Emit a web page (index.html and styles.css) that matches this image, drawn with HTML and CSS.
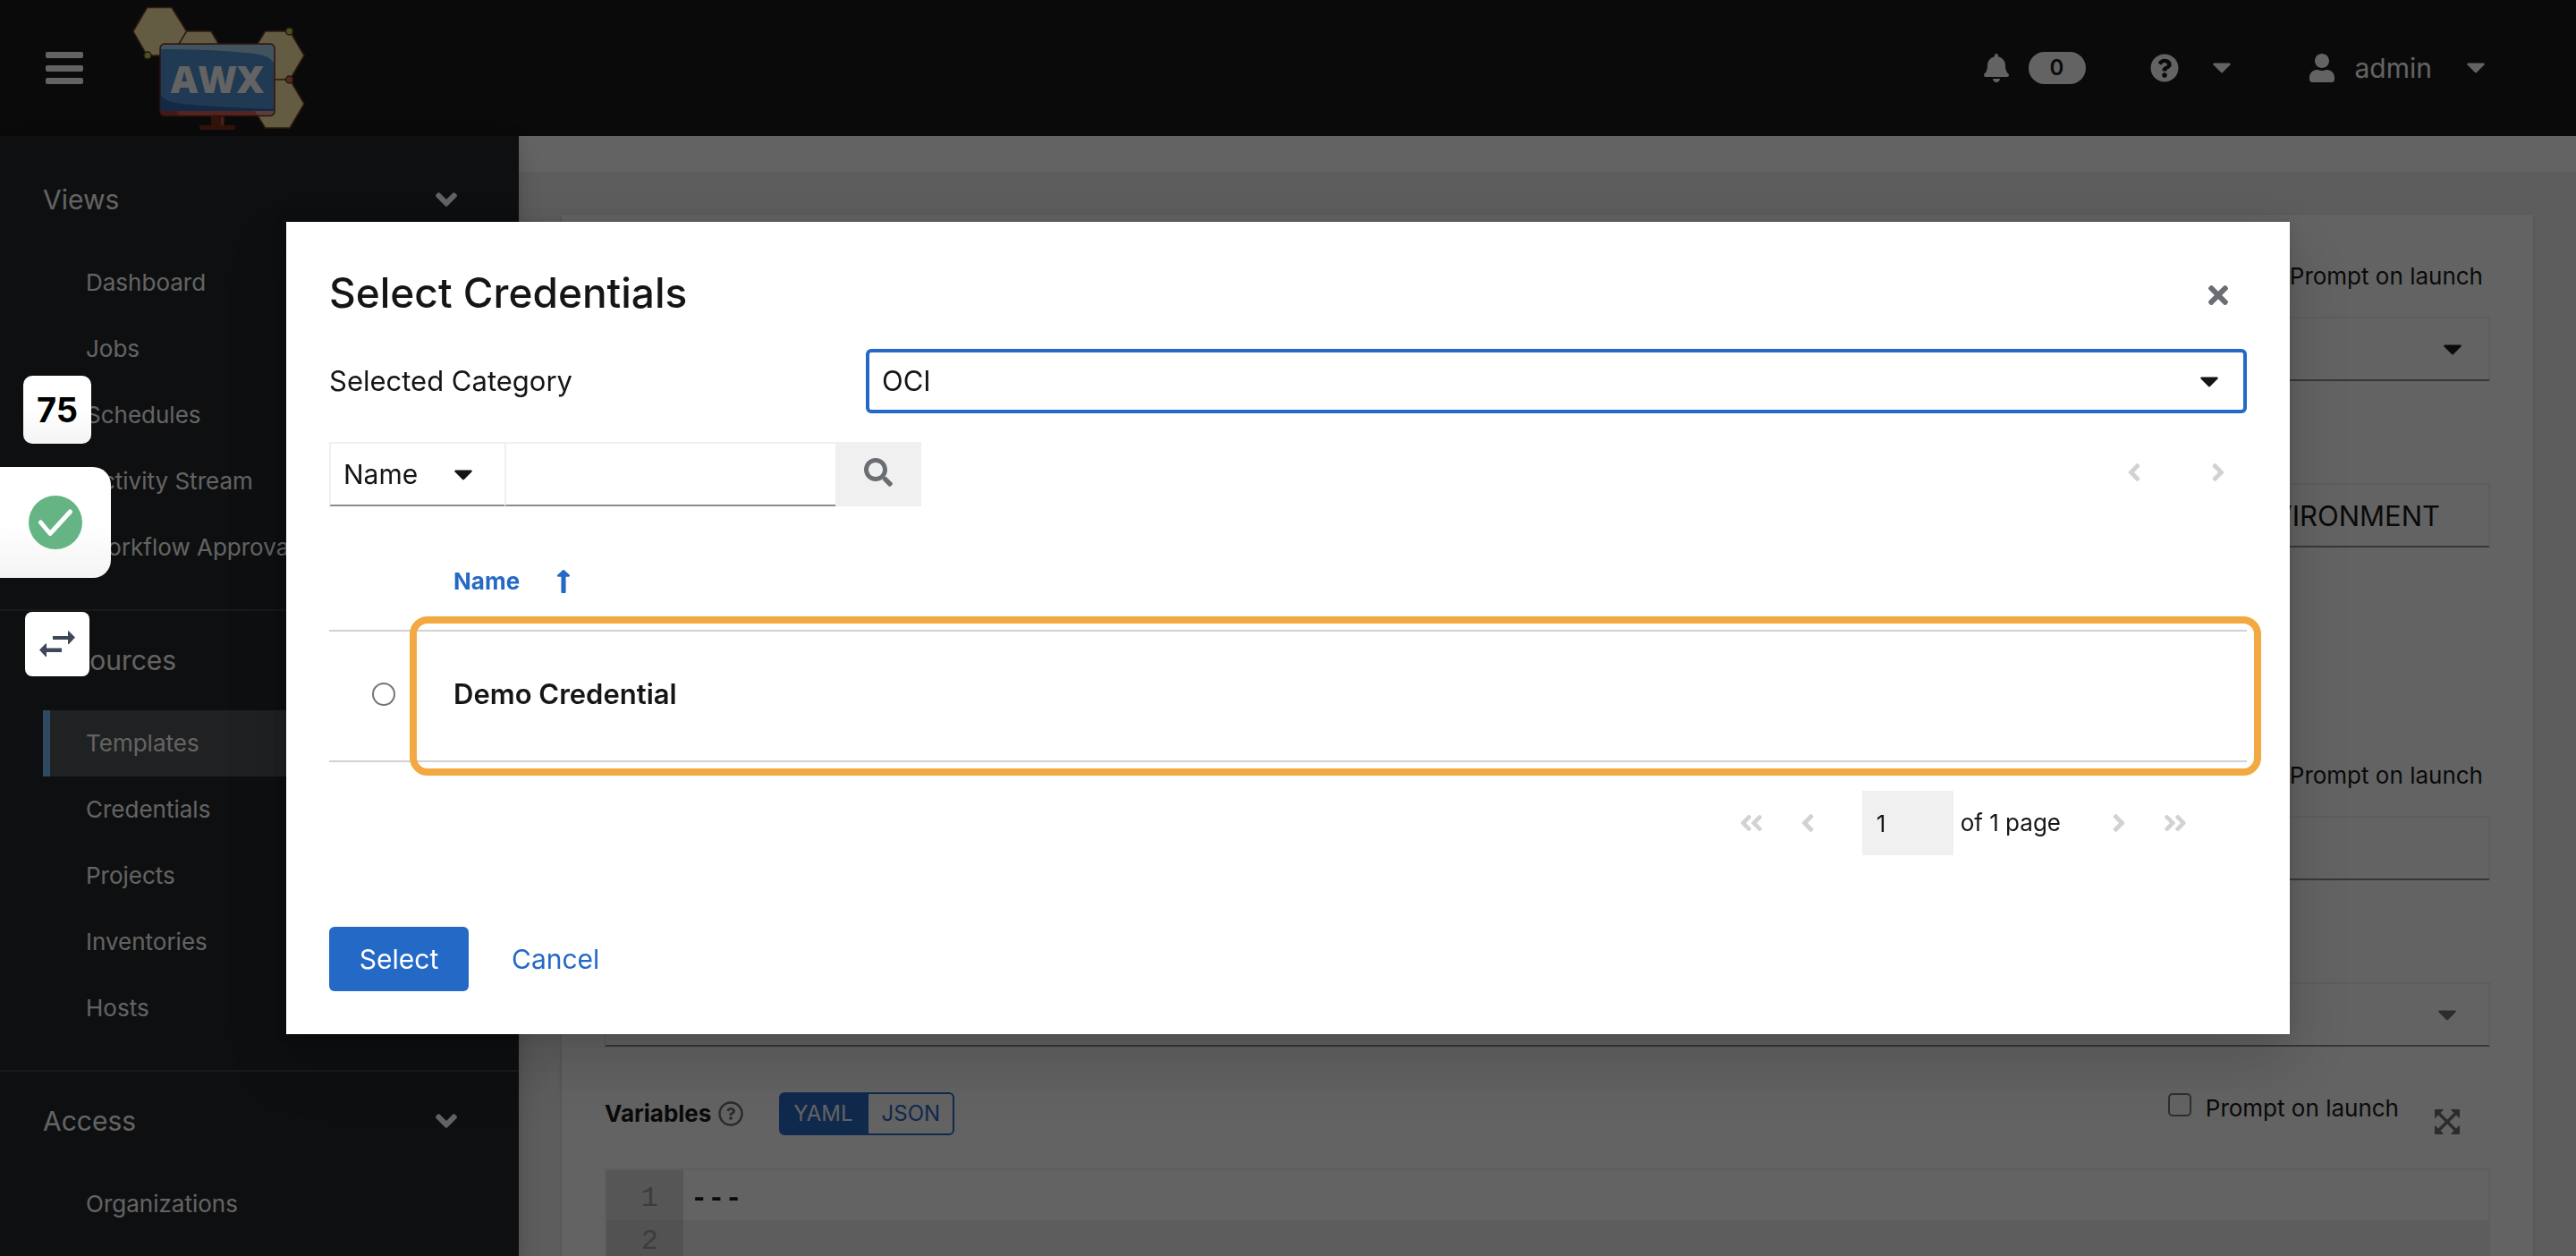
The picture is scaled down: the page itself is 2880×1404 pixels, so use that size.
FILE: index.html
```
<!DOCTYPE html>
<html lang="en">
<head>
<meta charset="utf-8">
<meta name="viewport" content="width=device-width, initial-scale=1">
<title>AWX | Select Credentials</title>
<link rel="stylesheet" href="styles.css">
</head>
<body>
<svg class="sprite" aria-hidden="true">
  <symbol id="caret" viewBox="8 190 304 175"><path d="M31.3 192h257.3c17.8 0 26.7 21.5 14.1 34.1L174.1 354.8c-7.8 7.8-20.5 7.8-28.3 0L17.2 226.1C4.6 213.5 13.5 192 31.3 192z"/></symbol>
  <symbol id="angle-down" viewBox="0 150 320 212"><path d="M143 352.3L7 216.3c-9.4-9.4-9.4-24.6 0-33.9l22.6-22.6c9.4-9.4 24.6-9.4 33.9 0l96.4 96.4 96.4-96.4c9.4-9.4 24.6-9.4 33.9 0l22.6 22.6c9.4 9.4 9.4 24.6 0 33.9l-136 136c-9.2 9.4-24.4 9.4-33.8 0z"/></symbol>
  <symbol id="angle-left" viewBox="22 94 212 324"><path d="M31.7 239l136-136c9.4-9.4 24.6-9.4 33.9 0l22.6 22.6c9.4 9.4 9.4 24.6 0 33.9L127.9 256l96.4 96.4c9.4 9.4 9.4 24.6 0 33.9L201.7 409c-9.4 9.4-24.6 9.4-33.9 0l-136-136c-9.5-9.4-9.5-24.6-.1-34z"/></symbol>
  <symbol id="angle-right" viewBox="22 94 212 324"><path transform="translate(256 0) scale(-1 1)" d="M31.7 239l136-136c9.4-9.4 24.6-9.4 33.9 0l22.6 22.6c9.4 9.4 9.4 24.6 0 33.9L127.9 256l96.4 96.4c9.4 9.4 9.4 24.6 0 33.9L201.7 409c-9.4 9.4-24.6 9.4-33.9 0l-136-136c-9.5-9.4-9.5-24.6-.1-34z"/></symbol>
</svg>

<div class="app">
  <header class="masthead">
    <div class="brand">
      <button class="icon-button" type="button" aria-label="Toggle navigation">
        <svg width="42" height="36" viewBox="0 0 42 36"><rect width="42" height="7" rx="2"/><rect y="15" width="42" height="7" rx="2"/><rect y="29" width="42" height="7" rx="2"/></svg>
      </button>
      <a class="brand-link" href="#" aria-label="AWX home">
        <svg width="194" height="140" viewBox="148 6 194 140">
          <g fill="#ffedab" stroke="#7d4329" stroke-width="1.5">
            <path d="M208.500 35H236L252 62 236 89H208L192 62Z"/>
            <path d="M149 35L164.500 8.500H192L208.500 35 192 62H164.500Z"/>
            <path d="M280 62L296.500 35H324L340 62 324 89H296.500Z"/>
            <path d="M280 116L296.500 89H324L340 116 324 143H296.500Z"/>
          </g>
          <path d="M236 129h15v11h11q1 0 1 1v3q0 1-1 1H224q-1 0-1-1v-3q0-1 1-1h12z" fill="#7c2d18"/>
          <path d="M247 131h3v9h-3z" fill="#9a5847"/>
          <rect x="179" y="49" width="128" height="80.500" rx="5" fill="#4d94d3"/>
          <path d="M180 55V54q0-4 4-4H302q4 0 4 4V70Q301 62 285 60 240 55 180 55Z" fill="#acd4ee"/>
          <path d="M180 107Q186 114 204 116 240 120 306 122V125H180Z" fill="#3067b4"/>
          <path d="M180 124H306V126q0 3-4 3H184q-4 0-4-3Z" fill="#e0584f"/>
          <path d="M180 124H198L200 129H184q-4 0-4-3Z" fill="#b03c34"/>
          <path d="M285 124H306V126q0 3-4 3H288Z" fill="#f09a94"/>
          <rect x="179" y="49" width="128" height="80.500" rx="5" fill="none" stroke="#7d3020" stroke-width="1.500"/>
          <g stroke="#5a3c14" stroke-width="1.500"><circle cx="165" cy="62" r="4" fill="#b9d054"/><circle cx="323.500" cy="35" r="4" fill="#b9d054"/><circle cx="323.500" cy="89" r="4" fill="#f0605a"/></g>
          <text class="logo-text" x="243" y="104" text-anchor="middle">AWX</text>
        </svg>
      </a>
    </div>
    <div class="tools">
      <button class="tool notify" type="button" aria-label="Pending approvals">
        <svg width="28" height="32" viewBox="0 0 448 512"><path d="M224 512c35.32 0 63.97-28.65 63.97-64H160.03c0 35.35 28.65 64 63.97 64zm215.39-149.71c-19.32-20.76-55.47-51.99-55.47-154.29 0-77.7-54.48-139.9-127.94-155.16V32c0-17.67-14.32-32-31.98-32s-31.98 14.33-31.98 32v20.84C118.56 68.1 64.08 130.3 64.08 208c0 102.3-36.15 133.53-55.47 154.29-6 6.45-8.66 14.16-8.61 21.71.11 16.4 12.98 32 32.1 32h383.8c19.12 0 32-15.6 32.1-32 .05-7.55-2.61-15.27-8.61-21.71z"/></svg>
        <span class="badge">0</span>
      </button>
      <button class="tool help" type="button" aria-label="Help">
        <svg width="32" height="32" viewBox="0 0 512 512"><path d="M504 256c0 136.997-111.043 248-248 248S8 392.997 8 256C8 119.083 119.043 8 256 8s248 111.083 248 248zM262.655 90c-54.497 0-89.255 22.957-116.549 63.758-3.536 5.286-2.353 12.415 2.715 16.258l34.699 26.31c5.205 3.947 12.621 3.008 16.665-2.122 17.864-22.658 30.113-35.797 57.303-35.797 20.429 0 45.698 13.148 45.698 32.958 0 14.976-12.363 22.667-32.534 33.976C247.128 238.528 216 254.941 216 296v4c0 6.627 5.373 12 12 12h56c6.627 0 12-5.373 12-12v-1.333c0-28.462 83.186-29.647 83.186-106.667 0-58.002-60.165-102-116.531-102zM256 338c-25.365 0-46 20.635-46 46 0 25.364 20.635 46 46 46s46-20.636 46-46c0-25.365-20.635-46-46-46z"/></svg>
        <svg width="20" height="12"><use href="#caret"/></svg>
      </button>
      <button class="tool user" type="button">
        <svg width="28" height="32" viewBox="0 0 448 512"><path d="M224 256c70.7 0 128-57.3 128-128S294.7 0 224 0 96 57.3 96 128s57.3 128 128 128zm89.6 32h-16.7c-22.2 10.2-46.9 16-72.900 16s-50.6-5.800-72.900-16h-16.700C60.200 288 0 348.200 0 422.400V464c0 26.500 21.500 48 48 48h352c26.500 0 48-21.500 48-48v-41.600c0-74.200-60.200-134.400-134.400-134.400z"/></svg>
        <span class="user-name">admin</span>
        <svg width="20" height="12"><use href="#caret"/></svg>
      </button>
    </div>
  </header>

  <nav class="sidebar" aria-label="Global">
    <section class="nav-section">
      <button class="nav-title" type="button">Views <svg width="24" height="16"><use href="#angle-down"/></svg></button>
      <ul class="nav-list">
        <li><a href="#">Dashboard</a></li>
        <li><a href="#">Jobs</a></li>
        <li><a href="#">Schedules</a></li>
        <li><a href="#">Activity Stream</a></li>
        <li><a href="#">Workflow Approvals</a></li>
      </ul>
    </section>
    <section class="nav-section">
      <button class="nav-title" type="button">Resources <svg width="24" height="16"><use href="#angle-down"/></svg></button>
      <ul class="nav-list">
        <li><a class="current" href="#" aria-current="page">Templates</a></li>
        <li><a href="#">Credentials</a></li>
        <li><a href="#">Projects</a></li>
        <li><a href="#">Inventories</a></li>
        <li><a href="#">Hosts</a></li>
      </ul>
    </section>
    <section class="nav-section">
      <button class="nav-title" type="button">Access <svg width="24" height="16"><use href="#angle-down"/></svg></button>
      <ul class="nav-list">
        <li><a href="#">Organizations</a></li>
      </ul>
    </section>
  </nav>

  <main class="content">
    <div class="page-head"></div>
    <form class="card">
      <div class="row">
        <label class="prompt"><input type="checkbox"> Prompt on launch</label>
        <div class="select-wrap">
          <select class="field" aria-label="Job type"><option></option></select>
          <svg class="select-caret" width="20" height="12"><use href="#caret"/></svg>
        </div>
      </div>
      <div class="row">
        <input class="field environment" type="text" value="ENVIRONMENT" aria-label="Execution environment">
      </div>
      <div class="row"></div>
      <div class="row">
        <label class="prompt"><input type="checkbox"> Prompt on launch</label>
        <input class="field" type="text" aria-label="Credentials">
      </div>
      <div class="row">
        <div class="select-wrap muted">
          <select class="field" aria-label="Labels"><option></option></select>
          <svg class="select-caret" width="20" height="12"><use href="#caret"/></svg>
        </div>
      </div>
      <div class="variables">
        <div class="variables-bar">
          <span class="variables-title">Variables</span>
          <button class="hint" type="button" aria-label="More information about variables">
            <svg width="28" height="28" viewBox="0 0 28 28"><circle cx="14" cy="14" r="12.500" fill="none" stroke="currentColor" stroke-width="2.500"/><path transform="translate(3.500 3.200) scale(.041)" d="M262.655 90c-54.497 0-89.255 22.957-116.549 63.758-3.536 5.286-2.353 12.415 2.715 16.258l34.699 26.31c5.205 3.947 12.621 3.008 16.665-2.122 17.864-22.658 30.113-35.797 57.303-35.797 20.429 0 45.698 13.148 45.698 32.958 0 14.976-12.363 22.667-32.534 33.976C247.128 238.528 216 254.941 216 296v4c0 6.627 5.373 12 12 12h56c6.627 0 12-5.373 12-12v-1.333c0-28.462 83.186-29.647 83.186-106.667 0-58.002-60.165-102-116.531-102zM256 338c-25.365 0-46 20.635-46 46 0 25.364 20.635 46 46 46s46-20.636 46-46c0-25.365-20.635-46-46-46z"/></svg>
          </button>
          <div class="toggle">
            <button class="toggle-button on" type="button">YAML</button>
            <button class="toggle-button" type="button">JSON</button>
          </div>
          <label class="prompt"><input type="checkbox"> Prompt on launch</label>
          <button class="expand" type="button" aria-label="Expand input">
            <svg width="28" height="28" viewBox="0 0 28 28"><path d="M5 5L23 23M23 5L5 23" stroke="currentColor" stroke-width="3.500"/><path d="M1 0H9Q10 0 9.500 1L1 9.500Q0 10 0 9V1Q0 0 1 0ZM27 0H19Q18 0 18.500 1L27 9.500Q28 10 28 9V1Q28 0 27 0ZM1 28H9Q10 28 9.500 27L1 18.500Q0 18 0 19V27Q0 28 1 28ZM27 28H19Q18 28 18.500 27L27 18.500Q28 18 28 19V27Q28 28 27 28Z"/></svg>
          </button>
        </div>
        <div class="editor">
          <div class="line"><span class="number">1</span><code>---</code></div>
          <div class="line active"><span class="number">2</span><code></code></div>
        </div>
      </div>
    </form>
  </main>
</div>

<div class="backdrop">
  <div class="modal" role="dialog" aria-modal="true" aria-labelledby="modal-title">
    <div class="modal-head">
      <h1 class="modal-title" id="modal-title">Select Credentials</h1>
      <button class="close" type="button" aria-label="Close">
        <svg width="22" height="22" viewBox="0 80 352 352"><path d="M242.72 256l100.07-100.07c12.28-12.28 12.28-32.19 0-44.48l-22.24-22.24c-12.28-12.28-32.19-12.28-44.48 0L176 189.28 75.93 89.21c-12.28-12.28-32.19-12.28-44.48 0L9.21 111.45c-12.28 12.28-12.28 32.19 0 44.48L109.28 256 9.21 356.07c-12.28 12.28-12.28 32.19 0 44.48l22.24 22.24c12.28 12.28 32.2 12.28 44.48 0L176 322.72l100.07 100.07c12.28 12.28 32.2 12.28 44.48 0l22.24-22.24c12.28-12.28 12.28-32.19 0-44.48L242.72 256z"/></svg>
      </button>
    </div>

    <div class="category">
      <label class="category-label" for="category">Selected Category</label>
      <div class="select-wrap">
        <select class="category-select" id="category"><option>OCI</option></select>
        <svg class="select-caret" width="20" height="12"><use href="#caret"/></svg>
      </div>
    </div>

    <div class="toolbar">
      <div class="search">
        <div class="select-wrap search-key">
          <select class="field" aria-label="Search by"><option>Name</option></select>
          <svg class="select-caret" width="20" height="12"><use href="#caret"/></svg>
        </div>
        <input class="field search-input" type="search" aria-label="Search text">
        <button class="search-button" type="submit" aria-label="Search">
          <svg width="32" height="32" viewBox="0 0 512 512"><path d="M505 442.7L405.3 343c-4.5-4.5-10.6-7-17-7H372c27.6-35.3 44-79.7 44-128C416 93.1 322.9 0 208 0S0 93.1 0 208s93.1 208 208 208c48.3 0 92.7-16.4 128-44v16.3c0 6.4 2.5 12.5 7 17l99.7 99.7c9.4 9.4 24.6 9.4 33.9 0l28.3-28.3c9.4-9.4 9.4-24.6.1-34zM208 336c-70.7 0-128-57.2-128-128 0-70.7 57.2-128 128-128 70.7 0 128 57.2 128 128 0 70.7-57.2 128-128 128z"/></svg>
        </button>
      </div>
      <div class="top-pager">
        <button class="page-button" type="button" disabled aria-label="Previous page"><svg width="14" height="20"><use href="#angle-left"/></svg></button>
        <button class="page-button" type="button" disabled aria-label="Next page"><svg width="14" height="20"><use href="#angle-right"/></svg></button>
      </div>
    </div>

    <table class="credentials">
      <thead>
        <tr>
          <td class="pick"></td>
          <th scope="col">
            <button class="sort" type="button">Name <svg width="14" height="26" viewBox="19 30 218 452" preserveAspectRatio="none"><path d="M88 166.059V468c0 6.627 5.373 12 12 12h56c6.627 0 12-5.373 12-12V166.059h46.059c21.382 0 32.09-25.851 16.971-40.971l-86.059-86.059c-9.373-9.373-24.569-9.373-33.941 0l-86.059 86.059c-15.119 15.119-4.411 40.971 16.971 40.971H88z"/></svg></button>
          </th>
        </tr>
      </thead>
      <tbody>
        <tr>
          <td class="pick"><input class="radio" type="radio" name="credential" id="credential-1"></td>
          <td class="highlight"><label for="credential-1">Demo Credential</label></td>
        </tr>
      </tbody>
    </table>

    <div class="pager">
      <button class="page-button" type="button" disabled aria-label="First page"><svg width="12" height="20"><use href="#angle-left"/></svg><svg width="12" height="20"><use href="#angle-left"/></svg></button>
      <button class="page-button" type="button" disabled aria-label="Previous page"><svg width="14" height="20"><use href="#angle-left"/></svg></button>
      <div class="page-of"><input class="page-input" id="page" type="text" value="1"><label for="page">of 1 page</label></div>
      <button class="page-button" type="button" disabled aria-label="Next page"><svg width="14" height="20"><use href="#angle-right"/></svg></button>
      <button class="page-button" type="button" disabled aria-label="Last page"><svg width="12" height="20"><use href="#angle-right"/></svg><svg width="12" height="20"><use href="#angle-right"/></svg></button>
    </div>

    <div class="actions">
      <button class="primary" type="button">Select</button>
      <button class="link" type="button">Cancel</button>
    </div>
  </div>
</div>

<aside class="guide" aria-label="Guide">
  <div class="guide-count">75</div>
  <button class="guide-done" type="button" aria-label="Mark step done">
    <svg width="60" height="60" viewBox="0 0 60 60"><circle cx="30" cy="30" r="30" fill="#65b584"/><path d="M13.500 30L24 42.500 46.500 18" fill="none" stroke="#fff" stroke-width="5" stroke-linecap="round" stroke-linejoin="round"/></svg>
  </button>
  <button class="guide-swap" type="button" aria-label="Swap side">
    <svg width="40" height="30" viewBox="0 0 40 30"><path d="M15 6H32V1Q32 0 33 0.500L40 7.500 33 15Q32 15.500 32 14.500V10H15ZM25 19.500H8V15Q8 14 7 14.500L0 21.500 7 29Q8 29.500 8 28.500V24H25Z"/></svg>
  </button>
</aside>
</body>
</html>
```
FILE: styles.css
```
* { box-sizing: border-box; }

:root {
  --black: #151515;
  --blue: #2569c7;
  --grey: #f0f0f0;
  --line: #d2d2d2;
  --icon: #6a6e73;
}

body {
  margin: 0;
  height: 100vh;
  overflow: hidden;
  background: var(--grey);
  color: var(--black);
  font: 400 26px/42px Inter, "Noto Sans", sans-serif;
}

button, input, select {
  margin: 0;
  padding: 0;
  border: 0;
  border-radius: 0;
  background: none;
  color: inherit;
  font: inherit;
  outline: 0;
}

select { appearance: none; }
a { color: inherit; text-decoration: none; }
svg { display: block; flex: none; fill: currentColor; }
.sprite { display: none; }

/* Page frame */
.app {
  display: grid;
  grid-template: 152px 1fr / 580px 1fr;
  height: 100vh;
}

.masthead {
  grid-column: 1 / -1;
  display: flex;
  align-items: center;
  justify-content: space-between;
  padding: 0 102px 0 51px;
  background: var(--black);
  color: #fff;
}

.brand { display: flex; align-items: center; gap: 55px; }
.logo-text { font: 800 42px "Open Sans", sans-serif; fill: #fff; }
.tools { display: flex; align-items: center; }
.tool { display: flex; align-items: center; }
.notify { gap: 22px; margin-right: 72px; }
.help { gap: 38px; margin-right: 88px; }
.user { gap: 23px; font-size: 30px; }
.user-name { margin-right: 16px; }

.badge {
  min-width: 64px;
  border-radius: 18px;
  background: #fff;
  color: var(--black);
  font-size: 24px;
  font-weight: 600;
  line-height: 36px;
  text-align: center;
}

.sidebar {
  z-index: 1;
  overflow: hidden;
  padding-top: 16px;
  background: #212427;
  color: #fff;
  box-shadow: 0 16px 32px rgb(3 3 3 / 16%), 0 0 12px rgb(3 3 3 / 8%);
}

.nav-section { padding: 16px 0 32px; border-bottom: 2px solid #3c3f42; }

.nav-title {
  display: flex;
  align-items: center;
  justify-content: space-between;
  width: 100%;
  height: 78px;
  padding: 0 69px 0 48px;
  font-size: 30px;
}

.nav-list { margin: 0; padding: 17px 0 0 48px; list-style: none; }
.nav-list a { display: block; padding: 16px 48px; }
.nav-list .current { padding-left: 40px; border-left: 8px solid #73bcf7; background: #4f5255; }

.content { overflow: hidden; }
.page-head { height: 40px; background: #fff; }

.card {
  display: flex;
  flex-direction: column;
  gap: 48px;
  min-height: 1300px;
  margin: 48px;
  padding: 48px;
  background: #fff;
  box-shadow: 0 2px 4px rgb(3 3 3 / 12%), 0 0 4px rgb(3 3 3 / 6%);
}

.row {
  display: flex;
  flex-direction: column;
  justify-content: flex-end;
  gap: 24px;
  min-height: 138px;
}

.prompt { display: flex; justify-content: flex-end; gap: 16px; padding-right: 8px; }

.prompt input {
  appearance: none;
  width: 26px;
  height: 26px;
  margin-top: 4px;
  border: 2px solid #767676;
  border-radius: 5px;
}

.select-wrap { position: relative; }
.select-caret { position: absolute; top: 50%; right: 32px; margin-top: -5px; pointer-events: none; }
.muted .select-caret { right: 38px; color: var(--icon); }

.field {
  display: block;
  width: 100%;
  height: 72px;
  padding: 0 14px;
  border: 2px solid var(--grey);
  border-bottom-color: #8a8d90;
  font-size: 30px;
}

.environment { padding-right: 54px; font-size: 31px; text-align: right; }

.variables-bar { display: flex; align-items: center; padding-right: 34px; }
.variables-title { margin-right: 8px; font-weight: 700; }
.hint { margin-right: 40px; color: var(--icon); }
.toggle { display: flex; margin-right: auto; }

.toggle-button {
  width: 98px;
  border: 2px solid var(--blue);
  border-radius: 0 6px 6px 0;
  color: var(--blue);
  font-size: 24px;
  line-height: 44px;
}

.toggle-button.on { border-radius: 6px 0 0 6px; background: var(--blue); color: #fff; }
.variables-bar .prompt { margin-bottom: 12px; padding-right: 40px; }
.expand { margin-top: 18px; color: var(--icon); }

.editor {
  margin-top: 34px;
  padding-top: 8px;
  border: 2px solid var(--grey);
  background: linear-gradient(90deg, #ddd 86px, #fff 0);
  font: 32px/48px "Liberation Mono", monospace;
}

.line { display: flex; }
.line code { font: inherit; font-weight: 700; padding-left: 8px; }
.line.active { min-height: 96px; background: linear-gradient(90deg, #d2d2d2 86px, var(--grey) 0); }
.number { width: 86px; padding-right: 28px; color: #999; text-align: right; }

/* Dialog */
.backdrop {
  position: fixed;
  inset: 0;
  z-index: 2;
  display: flex;
  align-items: center;
  justify-content: center;
  background: rgb(3 3 3 / 62%);
}

.modal {
  width: calc(100% - 128px);
  max-width: 2240px;
  padding: 48px;
  background: #fff;
  box-shadow: 0 32px 64px rgb(3 3 3 / 16%), 0 0 16px rgb(3 3 3 / 10%);
}

.modal-head { display: flex; align-items: center; justify-content: space-between; padding-right: 21px; }
.modal-title { margin: 0; font-size: 46px; font-weight: 500; line-height: 62px; }
.close { padding-top: 6px; color: var(--icon); }

.category {
  display: grid;
  grid-template-columns: 600px 1fr;
  align-items: center;
  margin-top: 32px;
}

.category-label { font-size: 31px; }

.category-select {
  width: 100%;
  height: 72px;
  padding: 0 14px;
  border: 4px solid var(--blue);
  border-radius: 6px;
  font-size: 31px;
}

.toolbar { display: flex; align-items: center; justify-content: space-between; margin-top: 32px; }
.search { display: flex; }
.search-key { width: 196px; }
.search-key .field { border-right: 0; }
.search-key .select-caret { right: 36px; }
.search-input { width: 370px; border-right: 0; }
.search-button { display: grid; place-items: center; width: 96px; padding-bottom: 4px; background: var(--grey); color: var(--icon); }
.top-pager { display: flex; gap: 36px; padding: 0 3px 4px 0; }
.page-button { display: flex; padding: 20px 22px; color: var(--line); }
.top-pager .page-button { padding-top: 18px; padding-bottom: 18px; }

.credentials { width: 100%; margin-top: 30px; border-collapse: separate; border-spacing: 0; }
.credentials td, .credentials th { padding: 0 0 0 24px; border-bottom: 2px solid var(--line); text-align: left; }
.credentials thead tr { height: 110px; }
.credentials tbody tr { height: 146px; }
.credentials tbody td { padding-bottom: 4px; }
.credentials .pick { width: 115px; padding-left: 48px; }
.sort { display: flex; align-items: center; gap: 42px; color: var(--blue); font-weight: 700; }

.radio {
  appearance: none;
  display: block;
  width: 26px;
  height: 26px;
  border: 2px solid #767676;
  border-radius: 50%;
}

.highlight { position: relative; font-size: 31px; font-weight: 600; }

.highlight::after {
  content: "";
  position: absolute;
  inset: -17px -16px -17px -25px;
  border: 8px solid #f2a941;
  border-radius: 20px;
  pointer-events: none;
}

.pager { display: flex; align-items: center; justify-content: flex-end; margin-top: 32px; padding-right: 46px; }
.page-of { display: flex; align-items: center; gap: 8px; margin: 0 36px 0 32px; }
.page-input { width: 102px; height: 72px; padding: 0 16px; background: var(--grey); }

.actions { display: flex; margin-top: 80px; font-size: 30px; line-height: 72px; }
.primary { min-width: 156px; padding: 0 32px; border-radius: 6px; background: var(--blue); color: #fff; }
.link { padding: 0 48px; color: var(--blue); }

/* Guide controls docked at the window's left edge */
.guide {
  position: fixed;
  top: 420px;
  left: 0;
  z-index: 3;
  display: flex;
  flex-direction: column;
  align-items: flex-start;
}

.guide-count, .guide-done, .guide-swap {
  display: grid;
  place-items: center;
  background: linear-gradient(#fff 50%, #f4f4f4);
}

.guide-count {
  width: 76px;
  height: 76px;
  margin-left: 26px;
  border-radius: 10px;
  color: #000;
  font-size: 38px;
  font-weight: 700;
}

.guide-done { width: 124px; height: 124px; margin-top: 26px; border-radius: 0 20px 20px 0; }
.guide-swap { width: 72px; height: 72px; margin: 38px 0 0 28px; border-radius: 8px; background: #fff; color: #3e4857; }
```
